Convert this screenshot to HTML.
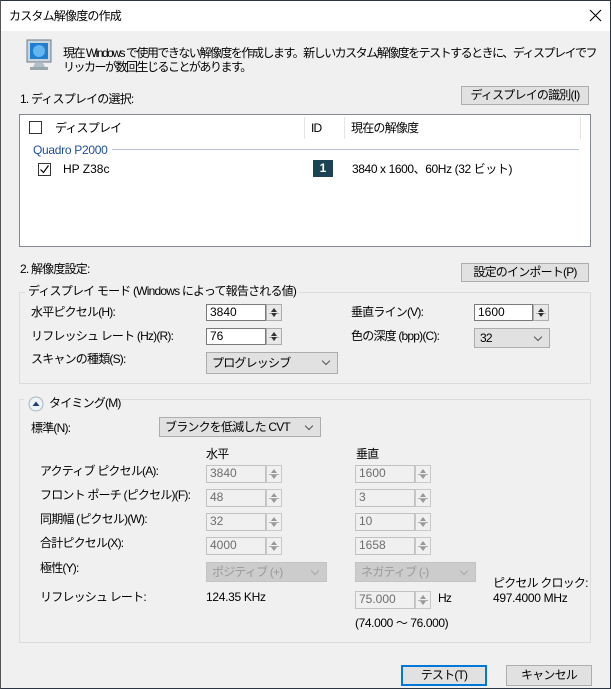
<!DOCTYPE html>
<html><head><meta charset="utf-8"><style>
*{box-sizing:border-box}
body{margin:0;width:611px;height:689px;overflow:hidden;background:#f0f0f0;font-family:"Liberation Sans","Noto Sans CJK JP",sans-serif;font-size:12px;letter-spacing:-0.8px;color:#000;position:relative}
.a{position:absolute;white-space:nowrap;line-height:14px}
.win{position:absolute;left:0;top:0;width:611px;height:689px;border:1px solid #2b3440;border-left-color:#555}
.title{position:absolute;left:0;top:0;width:611px;height:31px;background:#fff}
.btn{position:absolute;background:#e1e1e1;border:1px solid #adadad;text-align:center;line-height:17px}
.inp{position:absolute;background:#fff;border:1px solid #7a7a7a;padding-left:3px;line-height:15px;letter-spacing:0}
.spin{position:absolute;width:16px;background:#e8e8e8;border:1px solid #adadad}
.spin:before{content:"";position:absolute;left:4px;top:3px;border:3px solid transparent;border-bottom:4px solid #333;border-top:0}
.spin:after{content:"";position:absolute;left:4px;bottom:3px;border:3px solid transparent;border-top:4px solid #333;border-bottom:0}
.spin i{position:absolute;left:2px;right:2px;top:50%;border-top:1px solid #adadad}
.dis{background:#f0f0f0;border-color:#c2c2c2;color:#6d6d6d}
.spin.d:before{border-bottom-color:#999}.spin.d:after{border-top-color:#999}
.spin.d{border-color:#c8c8c8;background:#f0f0f0}
.cmb{position:absolute;background:#e1e1e1;border:1px solid #adadad;padding-left:5px;line-height:19px}
.cmb:after{content:"";position:absolute;right:8px;top:5px;width:5px;height:5px;border-right:1px solid #555;border-bottom:1px solid #555;transform:rotate(45deg)}
.cmb.d{background:#cccccc;border-color:#c4c4c4;color:#9a9a9a}
.cmb.d:after{border-color:#aaa}
.grp{position:absolute;border:1px solid #dcdcdc}
.cb{position:absolute;width:13px;height:13px;border:1px solid #333;background:#fff}
</style></head><body>
<div class="title"></div>
<div class="a" style="left:9px;top:9px">カスタム解像度の作成</div>
<svg class="a" style="left:589px;top:9px" width="13" height="13"><path d="M1 1L12 12M12 1L1 12" stroke="#000" stroke-width="1.1"/></svg>

<svg class="a" style="left:26px;top:39px" width="26" height="32"><rect x="1" y="1" width="24" height="22" fill="#c9d4dc" stroke="#6b7d8a"/><rect x="4" y="4" width="18" height="16" fill="#1f7fd0"/><circle cx="13" cy="12" r="6" fill="#63b6ee"/><path d="M9 24h8l2 4H7z" fill="#b4bec6"/><rect x="4" y="28" width="18" height="3" fill="#9aa6ae"/></svg>
<div class="a" style="left:63px;top:46px;letter-spacing:-1.5px">現在 Windows で使用できない解像度を作成します。新しいカスタム解像度をテストするときに、ディスプレイでフ</div>
<div class="a" style="left:63px;top:60px;letter-spacing:-1.5px">リッカーが数回生じることがあります。</div>

<div class="a" style="left:20px;top:92px">1. ディスプレイの選択:</div>
<div class="btn" style="left:461px;top:86px;width:128px;height:19px">ディスプレイの識別(I)</div>

<div style="position:absolute;left:19px;top:114px;width:572px;height:133px;background:#fff;border:1px solid #828790"></div>
<div style="position:absolute;left:304px;top:117px;height:22px;border-left:1px solid #e5e5e5"></div>
<div style="position:absolute;left:344px;top:117px;height:22px;border-left:1px solid #e5e5e5"></div>
<div style="position:absolute;left:580px;top:117px;height:22px;border-left:1px solid #e5e5e5"></div>
<div class="cb" style="left:29px;top:121px;border-color:#333"></div>
<div class="a" style="left:55px;top:121px">ディスプレイ</div>
<div class="a" style="left:311px;top:121px">ID</div>
<div class="a" style="left:351px;top:121px">現在の解像度</div>
<div class="a" style="left:33px;top:143px;color:#1e4e9a;letter-spacing:-0.3px">Quadro P2000</div>
<div style="position:absolute;left:112px;top:149px;width:467px;border-top:1px solid #b9c4d0"></div>
<div class="cb" style="left:38px;top:163px"></div>
<svg class="a" style="left:39px;top:164px" width="11" height="11"><path d="M1.5 5.5L4.5 8.5L9.5 1.5" stroke="#000" fill="none" stroke-width="1.2"/></svg>
<div class="a" style="left:63px;top:162px;letter-spacing:0">HP Z38c</div>
<div class="a" style="left:313px;top:160px;width:20px;height:17px;background:#1b4354;color:#fff;text-align:center;line-height:17px;font-weight:bold;letter-spacing:0">1</div>
<div class="a" style="left:352px;top:162px;letter-spacing:-0.4px">3840 x 1600、60Hz (32 ビット)</div>

<div class="a" style="left:20px;top:262px">2. 解像度設定:</div>
<div class="btn" style="left:461px;top:263px;width:128px;height:19px">設定のインポート(P)</div>

<div class="grp" style="left:19px;top:292px;width:572px;height:92px"></div>
<div class="a" style="left:25px;top:284px;background:#f0f0f0;padding:0 3px">ディスプレイ モード (Windows によって報告される値)</div>
<div class="a" style="left:31px;top:305px">水平ピクセル(H):</div>
<div class="inp" style="left:206px;top:304px;width:60px;height:17px">3840</div>
<div class="spin" style="left:266px;top:304px;height:17px"><i></i></div>
<div class="a" style="left:351px;top:305px">垂直ライン(V):</div>
<div class="inp" style="left:474px;top:304px;width:59px;height:17px">1600</div>
<div class="spin" style="left:533px;top:304px;height:17px"><i></i></div>
<div class="a" style="left:31px;top:329px">リフレッシュ レート (Hz)(R):</div>
<div class="inp" style="left:206px;top:328px;width:60px;height:17px">76</div>
<div class="spin" style="left:266px;top:328px;height:17px"><i></i></div>
<div class="a" style="left:351px;top:329px">色の深度 (bpp)(C):</div>
<div class="cmb" style="left:474px;top:328px;width:76px;height:20px">32</div>
<div class="a" style="left:31px;top:352px">スキャンの種類(S):</div>
<div class="cmb" style="left:206px;top:352px;width:132px;height:22px;line-height:20px">プログレッシブ</div>

<div class="grp" style="left:19px;top:399px;width:572px;height:244px"></div>
<div style="position:absolute;left:24px;top:394px;width:96px;height:14px;background:#f0f0f0"></div>
<svg class="a" style="left:28px;top:396px" width="16" height="16"><circle cx="8" cy="8" r="7" fill="#eef3f8" stroke="#a7b4c2"/><path d="M4.5 10h7L8 5.5z" fill="#1d3e6e"/></svg>
<div class="a" style="left:49px;top:396px">タイミング(M)</div>
<div class="a" style="left:31px;top:421px">標準(N):</div>
<div class="cmb" style="left:159px;top:417px;width:162px;height:20px;line-height:18px">ブランクを低減した CVT</div>

<div class="a" style="left:206px;top:447px">水平</div>
<div class="a" style="left:356px;top:447px">垂直</div>

<div class="a" style="left:40px;top:464px">アクティブ ピクセル(A):</div>
<div class="a" style="left:40px;top:488px">フロント ポーチ (ピクセル)(F):</div>
<div class="a" style="left:40px;top:512px">同期幅 (ピクセル)(W):</div>
<div class="a" style="left:40px;top:536px">合計ピクセル(X):</div>
<div class="a" style="left:40px;top:561px">極性(Y):</div>
<div class="a" style="left:40px;top:590px">リフレッシュ レート:</div>

<div class="inp dis" style="left:206px;top:465px;width:60px;height:18px">3840</div><div class="spin d" style="left:266px;top:465px;height:18px"><i></i></div>
<div class="inp dis" style="left:206px;top:489px;width:60px;height:18px">48</div><div class="spin d" style="left:266px;top:489px;height:18px"><i></i></div>
<div class="inp dis" style="left:206px;top:513px;width:60px;height:18px">32</div><div class="spin d" style="left:266px;top:513px;height:18px"><i></i></div>
<div class="inp dis" style="left:206px;top:537px;width:60px;height:18px">4000</div><div class="spin d" style="left:266px;top:537px;height:18px"><i></i></div>
<div class="inp dis" style="left:355px;top:465px;width:60px;height:18px">1600</div><div class="spin d" style="left:415px;top:465px;height:18px"><i></i></div>
<div class="inp dis" style="left:355px;top:489px;width:60px;height:18px">3</div><div class="spin d" style="left:415px;top:489px;height:18px"><i></i></div>
<div class="inp dis" style="left:355px;top:513px;width:60px;height:18px">10</div><div class="spin d" style="left:415px;top:513px;height:18px"><i></i></div>
<div class="inp dis" style="left:355px;top:537px;width:60px;height:18px">1658</div><div class="spin d" style="left:415px;top:537px;height:18px"><i></i></div>

<div class="cmb d" style="left:206px;top:562px;width:121px;height:20px">ポジティブ (+)</div>
<div class="cmb d" style="left:355px;top:562px;width:121px;height:20px">ネガティブ (-)</div>

<div class="a" style="left:206px;top:590px;letter-spacing:-0.3px">124.35 KHz</div>
<div class="inp dis" style="left:355px;top:591px;width:60px;height:18px">75.000</div><div class="spin d" style="left:415px;top:591px;height:18px"><i></i></div>
<div class="a" style="left:438px;top:591px">Hz</div>
<div class="a" style="left:493px;top:576px">ピクセル クロック:</div>
<div class="a" style="left:493px;top:591px;letter-spacing:-0.3px">497.4000 MHz</div>
<div class="a" style="left:355px;top:616px;letter-spacing:-0.4px">(74.000 ～ 76.000)</div>

<div class="btn" style="left:401px;top:665px;width:86px;height:21px;border:2px solid #0078d7;line-height:17px">テスト(T)</div>
<div class="btn" style="left:506px;top:665px;width:86px;height:21px;line-height:19px">キャンセル</div>
<div class="win"></div>
</body></html>
